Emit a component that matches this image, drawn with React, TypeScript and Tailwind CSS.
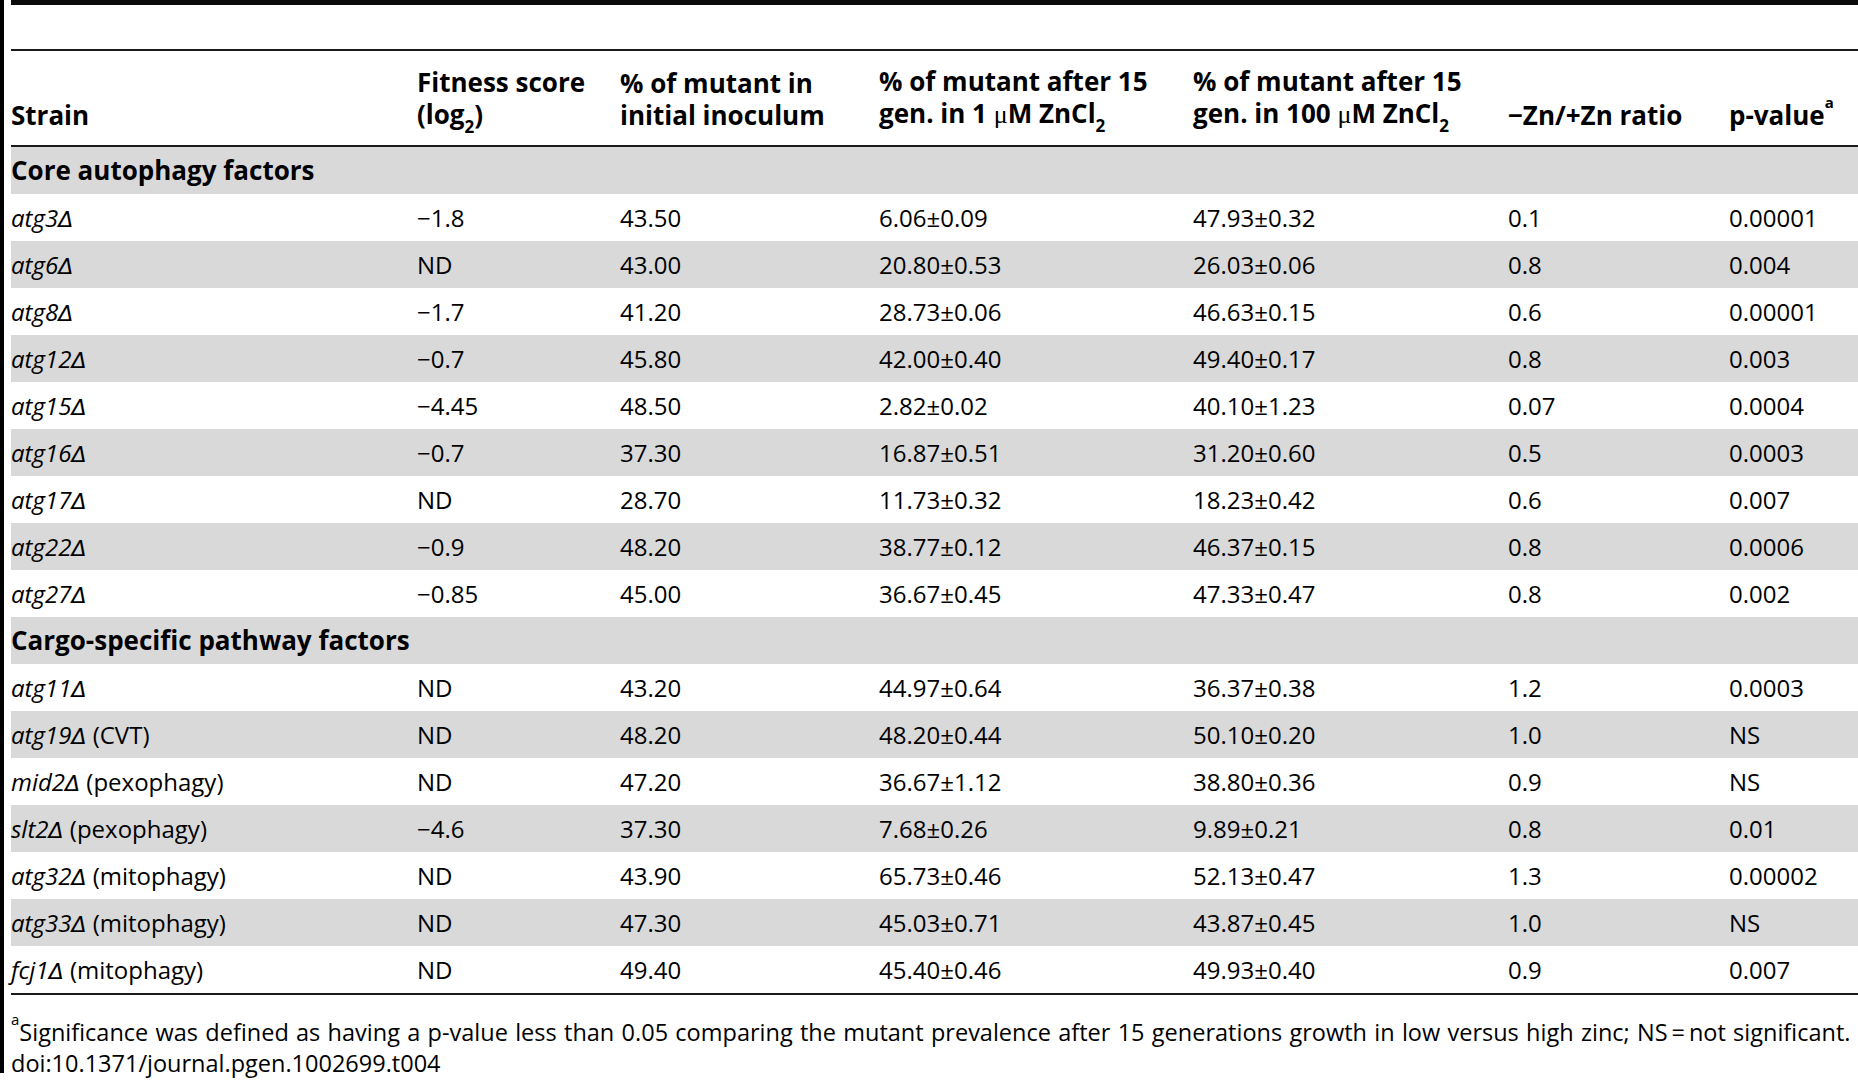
import React from 'react';

type Row =
  | { kind: 'section'; label: string }
  | {
      kind: 'row';
      gene: string;
      note?: string;
      fitness: string;
      initial: string;
      low: string;
      high: string;
      ratio: string;
      p: string;
    };

const rows: Row[] = [
  { kind: 'section', label: 'Core autophagy factors' },
  { kind: 'row', gene: 'atg3', fitness: '−1.8', initial: '43.50', low: '6.06±0.09', high: '47.93±0.32', ratio: '0.1', p: '0.00001' },
  { kind: 'row', gene: 'atg6', fitness: 'ND', initial: '43.00', low: '20.80±0.53', high: '26.03±0.06', ratio: '0.8', p: '0.004' },
  { kind: 'row', gene: 'atg8', fitness: '−1.7', initial: '41.20', low: '28.73±0.06', high: '46.63±0.15', ratio: '0.6', p: '0.00001' },
  { kind: 'row', gene: 'atg12', fitness: '−0.7', initial: '45.80', low: '42.00±0.40', high: '49.40±0.17', ratio: '0.8', p: '0.003' },
  { kind: 'row', gene: 'atg15', fitness: '−4.45', initial: '48.50', low: '2.82±0.02', high: '40.10±1.23', ratio: '0.07', p: '0.0004' },
  { kind: 'row', gene: 'atg16', fitness: '−0.7', initial: '37.30', low: '16.87±0.51', high: '31.20±0.60', ratio: '0.5', p: '0.0003' },
  { kind: 'row', gene: 'atg17', fitness: 'ND', initial: '28.70', low: '11.73±0.32', high: '18.23±0.42', ratio: '0.6', p: '0.007' },
  { kind: 'row', gene: 'atg22', fitness: '−0.9', initial: '48.20', low: '38.77±0.12', high: '46.37±0.15', ratio: '0.8', p: '0.0006' },
  { kind: 'row', gene: 'atg27', fitness: '−0.85', initial: '45.00', low: '36.67±0.45', high: '47.33±0.47', ratio: '0.8', p: '0.002' },
  { kind: 'section', label: 'Cargo-specific pathway factors' },
  { kind: 'row', gene: 'atg11', fitness: 'ND', initial: '43.20', low: '44.97±0.64', high: '36.37±0.38', ratio: '1.2', p: '0.0003' },
  { kind: 'row', gene: 'atg19', note: '(CVT)', fitness: 'ND', initial: '48.20', low: '48.20±0.44', high: '50.10±0.20', ratio: '1.0', p: 'NS' },
  { kind: 'row', gene: 'mid2', note: '(pexophagy)', fitness: 'ND', initial: '47.20', low: '36.67±1.12', high: '38.80±0.36', ratio: '0.9', p: 'NS' },
  { kind: 'row', gene: 'slt2', note: '(pexophagy)', fitness: '−4.6', initial: '37.30', low: '7.68±0.26', high: '9.89±0.21', ratio: '0.8', p: '0.01' },
  { kind: 'row', gene: 'atg32', note: '(mitophagy)', fitness: 'ND', initial: '43.90', low: '65.73±0.46', high: '52.13±0.47', ratio: '1.3', p: '0.00002' },
  { kind: 'row', gene: 'atg33', note: '(mitophagy)', fitness: 'ND', initial: '47.30', low: '45.03±0.71', high: '43.87±0.45', ratio: '1.0', p: 'NS' },
  { kind: 'row', gene: 'fcj1', note: '(mitophagy)', fitness: 'ND', initial: '49.40', low: '45.40±0.46', high: '49.93±0.40', ratio: '0.9', p: '0.007' },
];

// column starts measured off the table: 11, 417, 620, 879, 1193, 1508, 1729
const cols = 'grid grid-cols-[406px_203px_259px_314px_315px_221px_1fr]';

function Mu() {
  return <span className="font-normal font-['Liberation_Serif',serif]">μ</span>;
}

function Sub2() {
  return <sub className="text-[17px] align-[-5px] leading-none">2</sub>;
}

export default function App() {
  return (
    <div className="flex h-[1080px] w-[1858px] bg-white text-black font-['Open_Sans',sans-serif] overflow-hidden">
      <div className="w-[4px] h-[1073px] bg-black shrink-0" />
      <div className="ml-[7px] flex-1 flex flex-col">
        <div className="h-[5px] bg-[#0a0a0a]" />
        <div className="h-[44px]" />
        <div className="h-[2px] bg-[#1a1a1a]" />

        {/* header */}
        <div className={`${cols} h-[94px] items-end pb-[14px] text-[26px] leading-[32px] font-bold whitespace-nowrap`}>
          <div>Strain</div>
          <div>
            Fitness score
            <br />
            (log<Sub2 />)
          </div>
          <div>
            % of mutant in
            <br />
            initial inoculum
          </div>
          <div>
            % of mutant after 15
            <br />
            gen. in 1 <Mu />M ZnCl<Sub2 />
          </div>
          <div>
            % of mutant after 15
            <br />
            gen. in 100 <Mu />M ZnCl<Sub2 />
          </div>
          <div>−Zn/+Zn ratio</div>
          <div>
            p-value<sup className="text-[15px] align-[10px] leading-none">a</sup>
          </div>
        </div>
        <div className="h-[2px] bg-[#1a1a1a]" />

        {/* body */}
        <div className="flex flex-col text-[24px] whitespace-nowrap">
          {rows.map((r, i) => {
            const bg = i % 2 === 0 ? 'bg-[#d9d9d9]' : 'bg-white';
            if (r.kind === 'section') {
              return (
                <div key={i} className={`h-[47px] flex items-center text-[26px] font-bold ${bg}`}>
                  {r.label}
                </div>
              );
            }
            return (
              <div key={i} className={`${cols} h-[47px] items-center ${bg}`}>
                <div>
                  <span className="italic">
                    {r.gene}
                    <span className="font-['DejaVu_Sans',sans-serif] text-[22px] font-light">Δ</span>
                  </span>
                  {r.note && <span> {r.note}</span>}
                </div>
                <div>{r.fitness}</div>
                <div>{r.initial}</div>
                <div>{r.low}</div>
                <div>{r.high}</div>
                <div>{r.ratio}</div>
                <div>{r.p}</div>
              </div>
            );
          })}
        </div>
        <div className="h-[2px] bg-[#1a1a1a]" />

        {/* footnote */}
        <div className="pt-[22px] text-[23.5px] leading-[31px] whitespace-nowrap">
          <p className="[word-spacing:1.2px]">
            <sup className="text-[15px] align-[9px] leading-none">a</sup>Significance was defined as having a p-value less
            than 0.05 comparing the mutant prevalence after 15 generations growth in low versus high zinc; NS{'\u2009'}={'\u2009'}not
            significant.
          </p>
          <p>doi:10.1371/journal.pgen.1002699.t004</p>
        </div>
      </div>
    </div>
  );
}
